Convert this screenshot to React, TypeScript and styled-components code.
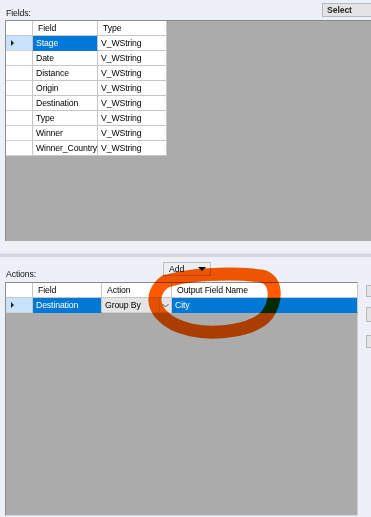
import React from "react"
import styled, { createGlobalStyle } from "styled-components"

const fields = [
  "Stage",
  "Date",
  "Distance",
  "Origin",
  "Destination",
  "Type",
  "Winner",
  "Winner_Country",
]

const GlobalStyle = createGlobalStyle`
  html, body {
    margin: 0;
    padding: 0;
    background: #eef0f8;
  }
  body {
    font-family: "Liberation Sans", Arial, sans-serif;
    font-size: 8.7px;
    letter-spacing: -0.12px;
    color: #000;
  }
`

export default function App() {
  return (
    <>
      <GlobalStyle />
      <Page>
        <TopBar>
          <Label>Fields:</Label>
          <SelectButton>
            Select
            <Caret />
          </SelectButton>
        </TopBar>

        <FieldsPanel>
          <Table $cols="27px 65px 69px">
            <HeadCell $rowHead />
            <HeadCell>Field</HeadCell>
            <HeadCell>Type</HeadCell>
            {fields.map((name, i) => (
              <React.Fragment key={name}>
                <RowHead $current={i === 0}>{i === 0 && <Arrow />}</RowHead>
                <Cell $selected={i === 0}>{name}</Cell>
                <Cell>V_WString</Cell>
              </React.Fragment>
            ))}
          </Table>
        </FieldsPanel>

        <Splitter />

        <ActionsBar>
          <Label>Actions:</Label>
          <AddButton>
            Add
            <Caret />
          </AddButton>
        </ActionsBar>

        <BottomRow>
          <ActionsPanel>
            <Table $cols="27px 69px 58px 12px 186px">
              <HeadCell $rowHead />
              <HeadCell>Field</HeadCell>
              <HeadCell $span={2}>Action</HeadCell>
              <HeadCell>Output Field Name</HeadCell>
              <RowHead $current>
                <Arrow />
              </RowHead>
              <Cell $selected>Destination</Cell>
              <ComboCell>Group By</ComboCell>
              <ComboArrow>
                <svg width="7" height="5" viewBox="0 0 7 5">
                  <polyline
                    points="0.5,1 3.5,4 6.5,1"
                    fill="none"
                    stroke="#555"
                    strokeWidth="1"
                  />
                </svg>
              </ComboArrow>
              <Cell $selected>City</Cell>
            </Table>
          </ActionsPanel>
          <SideButtons>
            <SideButton $h={12} />
            <SideButton $h={15} $top={10} />
            <SideButton $h={13} $top={13} />
          </SideButtons>
        </BottomRow>

        <Annotation viewBox="0 0 371 517">
          <path
            d="M 163 283 C 182 274, 232 272, 261 276 C 278 279, 277 301, 267 315 C 254 331, 215 335, 191 330 C 164 324, 151 308, 156 293 C 158 288, 160 285, 166 281"
            fill="none"
            stroke="#ff5a00"
            strokeWidth="13"
            strokeLinecap="round"
          />
        </Annotation>
      </Page>
    </>
  )
}

const Page = styled.div`
  position: relative;
  width: 371px;
  height: 517px;
  overflow: hidden;
  display: flex;
  flex-direction: column;
  background: #eef0f8;
`

const TopBar = styled.div`
  height: 20px;
  display: flex;
  align-items: flex-start;
  padding-left: 6px;
`

const Label = styled.span`
  align-self: flex-end;
  padding-bottom: 2px;
  color: #111;
`

const Caret = styled.span`
  display: inline-block;
  width: 0;
  height: 0;
  border-left: 4px solid transparent;
  border-right: 4px solid transparent;
  border-top: 4px solid #000;
`

const SelectButton = styled.div`
  margin-left: auto;
  margin-top: 3px;
  width: 60px;
  height: 14px;
  box-sizing: border-box;
  flex: none;
  display: flex;
  align-items: center;
  justify-content: space-between;
  padding: 0 4px 0 4px;
  margin-right: -11px;
  background: #e4e4e6;
  border: 1px solid #b9b9bd;
  font-weight: bold;
  color: #2a2a2a;
  ${Caret} {
    border-top-color: #777;
    border-width: 3px 3px 0 3px;
  }
`

const FieldsPanel = styled.div`
  margin-left: 5px;
  height: 221px;
  box-sizing: border-box;
  background: #ababab;
  border-top: 1px solid #8a8a8a;
  border-left: 1px solid #8e8e8e;
`

const Table = styled.div<{ $cols: string }>`
  display: grid;
  grid-template-columns: ${(p) => p.$cols};
  grid-auto-rows: 15px;
  width: fit-content;
  background: #fff;
`

const HeadCell = styled.div<{ $span?: number; $rowHead?: boolean }>`
  grid-column: span ${(p) => p.$span ?? 1};
  box-sizing: border-box;
  display: flex;
  align-items: center;
  padding-left: ${(p) => (p.$rowHead ? 0 : 5)}px;
  border-right: 1px solid #c6c6c6;
  border-bottom: 1px solid #c6c6c6;
  background: #fff;
  white-space: nowrap;
`

const RowHead = styled.div<{ $current?: boolean }>`
  box-sizing: border-box;
  display: flex;
  align-items: center;
  padding-left: 5px;
  border-right: 1px solid #c6c6c6;
  border-bottom: 1px solid #d2d2d2;
  background: ${(p) => (p.$current ? "#c9e2fb" : "#fff")};
`

const Arrow = styled.span`
  width: 0;
  height: 0;
  border-top: 3px solid transparent;
  border-bottom: 3px solid transparent;
  border-left: 3px solid #222;
`

const Cell = styled.div<{ $selected?: boolean }>`
  box-sizing: border-box;
  display: flex;
  align-items: center;
  padding-left: 3px;
  border-right: 1px solid #c6c6c6;
  border-bottom: 1px solid ${(p) => (p.$selected ? "#0078d7" : "#c6c6c6")};
  background: ${(p) => (p.$selected ? "#0078d7" : "#fff")};
  color: ${(p) => (p.$selected ? "#fff" : "#000")};
  white-space: nowrap;
  overflow: hidden;
`

const ComboCell = styled.div`
  box-sizing: border-box;
  display: flex;
  align-items: center;
  padding-left: 3px;
  border-right: 1px solid #d0d0d0;
  border-bottom: 1px solid #d0d0d0;
  background: #e4e4e4;
  white-space: nowrap;
`

const ComboArrow = styled.div`
  box-sizing: border-box;
  display: flex;
  align-items: center;
  justify-content: center;
  border-right: 1px solid #c6c6c6;
  border-bottom: 1px solid #d0d0d0;
  background: #e4e4e4;
`

const Splitter = styled.div`
  margin-top: 12px;
  height: 3px;
  background: #d4d6dc;
  border-top: 1px solid #e2e4ec;
`

const ActionsBar = styled.div`
  height: 25px;
  display: flex;
  align-items: flex-start;
  padding-left: 6px;
  ${Label} {
    flex: 0 0 157px;
    padding-bottom: 3px;
  }
`

const AddButton = styled.div`
  margin-top: 5px;
  width: 48px;
  height: 14px;
  box-sizing: border-box;
  display: flex;
  align-items: center;
  justify-content: space-between;
  padding: 0 4px 0 5px;
  background: #eceef4;
  border: 1px solid #bdbdc2;
`

const BottomRow = styled.div`
  display: flex;
  align-items: flex-start;
`

const ActionsPanel = styled.div`
  margin-left: 5px;
  width: 353px;
  height: 234px;
  flex: none;
  box-sizing: border-box;
  background: #ababab;
  border-top: 1px solid #8a8a8a;
  border-left: 1px solid #8e8e8e;
  border-right: 1px solid #cfcfd2;
  border-bottom: 1px solid #d6d6da;
`

const SideButtons = styled.div`
  margin-left: 8px;
  padding-top: 3px;
  display: flex;
  flex-direction: column;
  flex: none;
`

const SideButton = styled.div<{ $h: number; $top?: number }>`
  width: 20px;
  height: ${(p) => p.$h}px;
  margin-top: ${(p) => p.$top ?? 0}px;
  box-sizing: border-box;
  background: #e4e4e6;
  border: 1px solid #b9b9bd;
`

const Annotation = styled.svg`
  position: absolute;
  left: 0;
  top: 0;
  width: 371px;
  height: 517px;
  pointer-events: none;
  mix-blend-mode: multiply;
`
